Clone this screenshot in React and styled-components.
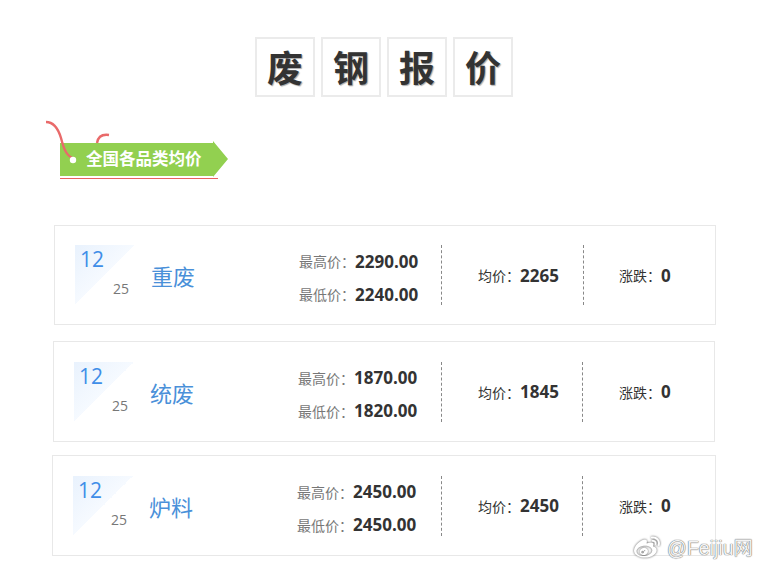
import React from "react";
import styled, { createGlobalStyle } from "styled-components";
import { SiSinaweibo } from "react-icons/si";

const Global = createGlobalStyle`
  html, body { margin: 0; padding: 0; background: #fff; }
  body { font-family: "Open Sans", "Noto Sans CJK SC", sans-serif; }
`;
const Page = styled.div`
  position: relative;
  width: 761px;
  height: 570px;
  overflow: hidden;
  padding-top: 37px;
  box-sizing: border-box;
`;
const Title = styled.div`
  display: flex;
  justify-content: center;
  gap: 6px;
  margin-left: 7px;
`;
const TitleChar = styled.div`
  width: 60px;
  height: 60px;
  box-sizing: border-box;
  border: 2px solid #ebebeb;
  padding-bottom: 2px;
  display: flex;
  align-items: center;
  justify-content: center;
  font-size: 36px;
  font-weight: 700;
  color: #333;
  text-shadow: 1px 1px 1px #aaa;
`;
const TagWrap = styled.div`
  position: relative;
  margin: 44px 0 0 60px;
  width: 168px;
  height: 50px;
`;
const Tag = styled.div`
  width: 168px;
  height: 36px;
  background: #92d050;
  clip-path: polygon(0 2px, 153px 2px, 153px 0, 168px 18px, 153px 36px, 153px 35px, 0 35px);
  color: #fff;
  font-size: 16.5px;
  font-weight: 700;
  line-height: 36px;
  padding-left: 26px;
  box-sizing: border-box;
`;
const TagLine = styled.div`
  width: 158px;
  height: 1px;
  margin-top: 1px;
  background: #e8605f;
`;
const Curls = styled.svg`
  position: absolute;
  left: -16px;
  top: -22px;
`;
const Rows = styled.div`
  margin-top: 34px;
`;
const Card = styled.div`
  display: flex;
  align-items: center;
  box-sizing: border-box;
  height: ${p => p.$h}px;
  width: ${p => p.$w}px;
  margin-left: ${p => p.$left}px;
  margin-top: ${p => p.$top}px;
  padding-left: 20px;
  border: 1px solid #e8e8e8;
`;
const DateBox = styled.div`
  position: relative;
  width: 60px;
  height: 60px;
  flex: none;
  background: linear-gradient(135deg, #e9f2fd 0%, #f6faff 50%, #fff 50%);
`;
const Month = styled.span`
  position: absolute;
  left: 5px;
  top: 0;
  font-size: 21px;
  line-height: 28px;
  color: #3f8ee8;
`;
const Day = styled.span`
  position: absolute;
  right: 6px;
  bottom: 7px;
  font-size: 14px;
  line-height: 18px;
  color: #777;
`;
const Name = styled.div`
  flex: none;
  width: 148px;
  margin-left: 16px;
  font-size: 22px;
  color: #4a90d9;
`;
const Prices = styled.div`
  flex: none;
  width: ${p => p.$w}px;
  padding-top: 5px;
  display: flex;
  flex-direction: column;
  gap: 7px;
`;
const PriceRow = styled.div`
  display: flex;
  align-items: center;
  height: 26px;
`;
const MutedLabel = styled.span`
  font-size: 14px;
  color: #777;
`;
const DarkLabel = styled.span`
  font-size: 14px;
  color: #333;
`;
const Value = styled.span`
  font-size: 17px;
  font-weight: 700;
  color: #333;
`;
const Divider = styled.div`
  flex: none;
  width: 0;
  height: 60px;
  border-left: 1px dashed #888;
`;
const Cell = styled.div`
  flex: none;
  width: ${p => p.$w}px;
  padding-left: ${p => p.$pad}px;
  box-sizing: border-box;
  display: flex;
  align-items: center;
`;
const Watermark = styled.div`
  position: absolute;
  right: 8px;
  bottom: 9px;
  display: flex;
  align-items: center;
  gap: 6px;
  font-family: "Liberation Sans", "Noto Sans CJK SC", sans-serif;
  font-size: 19.5px;
  color: #f4f4f4;
  text-shadow: 0 0 1px #666, 0 0 1px #666;
`;
const WeiboIcon = styled(SiSinaweibo)`
  width: 28px;
  height: 26px;
  color: #fff;
  filter: drop-shadow(0 0 1px #555);
`;

const data = [
  { name: "重废", high: "2290.00", low: "2240.00", avg: "2265", left: 54, w: 662, h: 100, top: 0, priceW: 142, avgW: 141, chgPad: 35 },
  { name: "统废", high: "1870.00", low: "1820.00", avg: "1845", left: 53, w: 662, h: 101, top: 16, priceW: 143, avgW: 140, chgPad: 36 },
  { name: "炉料", high: "2450.00", low: "2450.00", avg: "2450", left: 52, w: 664, h: 101, top: 13, priceW: 144, avgW: 140, chgPad: 36 },
];

export default function App() {
  return (
    <Page>
      <Global />
      <Title>
        {["废", "钢", "报", "价"].map(c => <TitleChar key={c}>{c}</TitleChar>)}
      </Title>
      <TagWrap>
        <Tag>全国各品类均价</Tag>
        <TagLine />
        <Curls width="90" height="50" viewBox="0 0 90 50" fill="none">
          <path d="M2 3 C10 3 14 9 17 19 C20 31 23 38 31 40" stroke="#e96a6a" strokeWidth="2.4" />
          <circle cx="29" cy="41" r="3.2" fill="#fff" />
          <path d="M53 24 C54 18 58 15 65 16" stroke="#e96a6a" strokeWidth="2.4" />
        </Curls>
      </TagWrap>
      <Rows>
        {data.map(r => (
          <Card key={r.name} $left={r.left} $w={r.w} $h={r.h} $top={r.top}>
            <DateBox>
              <Month>12</Month>
              <Day>25</Day>
            </DateBox>
            <Name>{r.name}</Name>
            <Prices $w={r.priceW}>
              <PriceRow><MutedLabel>最高价：</MutedLabel><Value>{r.high}</Value></PriceRow>
              <PriceRow><MutedLabel>最低价：</MutedLabel><Value>{r.low}</Value></PriceRow>
            </Prices>
            <Divider />
            <Cell $w={r.avgW} $pad={36}><DarkLabel>均价：</DarkLabel><Value>{r.avg}</Value></Cell>
            <Divider />
            <Cell $w={130} $pad={r.chgPad}><DarkLabel>涨跌：</DarkLabel><Value>0</Value></Cell>
          </Card>
        ))}
      </Rows>
      <Watermark><WeiboIcon />@Feijiu网</Watermark>
    </Page>
  );
}
